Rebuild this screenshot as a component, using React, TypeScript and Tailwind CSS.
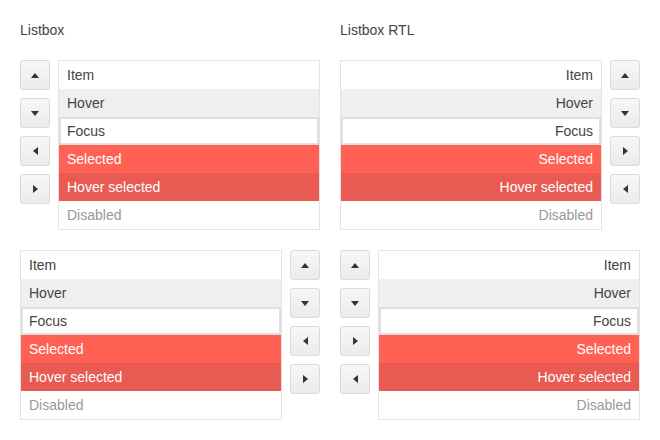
import React from "react";

type Dir = "up" | "down" | "left" | "right";

function Arrow({ dir }: { dir: Dir }) {
  const pts: Record<Dir, string> = {
    up: "0,5 4,0 8,5",
    down: "0,0 8,0 4,5",
    left: "5,0 5,8 0,4",
    right: "0,0 0,8 5,4",
  };
  const vertical = dir === "up" || dir === "down";
  return (
    <svg width={vertical ? 8 : 5} height={vertical ? 5 : 8} viewBox={vertical ? "0 0 8 5" : "0 0 5 8"}>
      <polygon points={pts[dir]} fill="#333" />
    </svg>
  );
}

function Btn({ dir }: { dir: Dir }) {
  return (
    <div className="w-[30px] h-[30px] rounded-[3px] border border-[#dadada] bg-gradient-to-b from-[#f7f7f7] to-[#ebebeb] flex items-center justify-center">
      <Arrow dir={dir} />
    </div>
  );
}

function Buttons({ dirs }: { dirs: Dir[] }) {
  return (
    <div className="flex flex-col gap-2 shrink-0">
      {dirs.map((d, i) => (
        <Btn key={i} dir={d} />
      ))}
    </div>
  );
}

function List({ rtl }: { rtl?: boolean }) {
  const align = rtl ? "justify-end" : "justify-start";
  const row = `h-[28px] px-2 flex items-center ${align}`;
  return (
    <div className="w-[262px] border border-[#e3e3e3] bg-white text-[14px] shrink-0">
      <div className={`${row} text-[#444]`}>Item</div>
      <div className={`${row} text-[#444] bg-[#efefef]`}>Hover</div>
      <div className={`h-[28px] px-[6px] flex items-center ${align} text-[#444] border-2 border-[#dfdfdf]`}>Focus</div>
      <div className={`${row} text-white bg-[#ff6155]`}>Selected</div>
      <div className={`${row} text-white bg-[#e95b52]`}>Hover selected</div>
      <div className={`${row} text-[#999]`}>Disabled</div>
    </div>
  );
}

export default function App() {
  return (
    <div
      className="w-[660px] h-[440px] bg-white p-5 flex gap-5"
      style={{ fontFamily: '"Liberation Sans", Arial, sans-serif' }}
    >
      <div className="w-[300px] flex flex-col">
        <div className="h-[20px] text-[14px] text-[#444] leading-[20px]">Listbox</div>
        <div className="mt-5 flex gap-2">
          <Buttons dirs={["up", "down", "left", "right"]} />
          <List />
        </div>
        <div className="mt-5 flex gap-2">
          <List />
          <Buttons dirs={["up", "down", "left", "right"]} />
        </div>
      </div>
      <div className="w-[300px] flex flex-col">
        <div className="h-[20px] text-[14px] text-[#444] leading-[20px]">Listbox RTL</div>
        <div className="mt-5 flex gap-2">
          <List rtl />
          <Buttons dirs={["up", "down", "right", "left"]} />
        </div>
        <div className="mt-5 flex gap-2">
          <Buttons dirs={["up", "down", "right", "left"]} />
          <List rtl />
        </div>
      </div>
    </div>
  );
}
